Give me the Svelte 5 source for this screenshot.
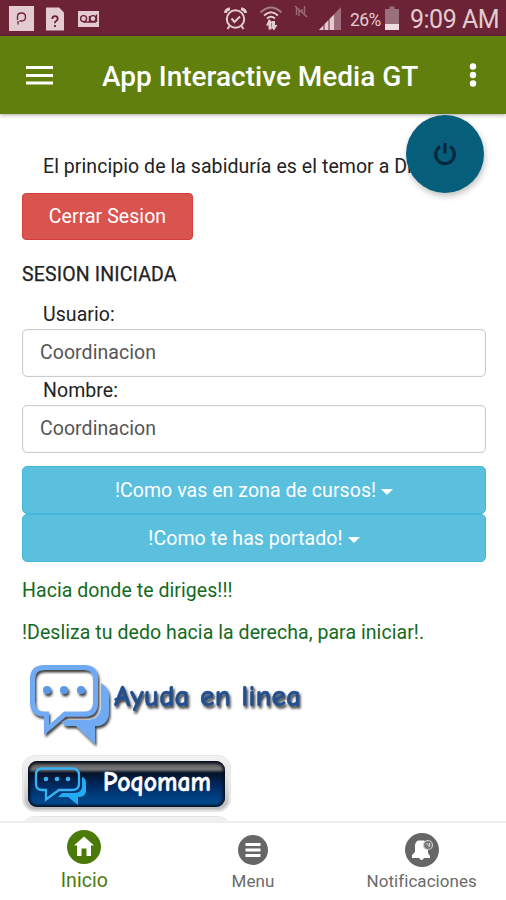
<script>
  const fields = [
    { label: 'Usuario:', value: 'Coordinacion' },
    { label: 'Nombre:', value: 'Coordinacion' }
  ];
  const menus = ['!Como vas en zona de cursos!', '!Como te has portado!'];
</script>

<div class="app">
  <div class="status">
    <svg class="left" width="110" height="36" viewBox="0 0 110 36">
      <rect x="9" y="6" width="25" height="25" fill="#e3cbd1" />
      <path d="M18 24.500v-3.500M17.500 20v-3.500q0-3.500 4-3.500t4 4-4 4h-2" fill="none" stroke="#6b2335" stroke-width="1.300" />
      <path d="M46 7.500h13l5 5V30.500H46z" fill="#e3cbd1" />
      <path d="M52.300 19q0-2.800 2.700-2.800t2.700 2.500q0 1.500-1.500 2.300t-1.200 2.200M55 25v2" fill="none" stroke="#6b2335" stroke-width="1.800" />
      <rect x="78" y="11" width="21" height="16" fill="#e3cbd1" />
      <g fill="none" stroke="#6b2335" stroke-width="1.400"><circle cx="83.600" cy="18.600" r="3" /><circle cx="93" cy="18.600" r="3" /><path d="M83 22h13M89.500 16v6M96.500 14.500V22" /></g>
    </svg>
    <svg class="right" width="126" height="36" viewBox="0 0 126 36">
      <g fill="none" stroke="#e3cbd1" stroke-width="2">
        <circle cx="15.500" cy="19" r="8.700" />
        <path d="M11.500 18.500l3 3.500 5.500-5.500M9.500 26l-2 3M21.500 26l2 3" />
        <path d="M5.500 13q0-3.500 4.500-4.300M25.500 13q0-3.500-4.500-4.300" stroke-width="3" />
        <path d="M40.500 12.500q10.500-10 21 0" stroke="#a77b88" />
        <path d="M44 15.500q7-6.500 14 0M47 18.500q4-3.500 8 0" />
      </g>
      <path d="M49 19l4 4h-1.500v6.500h-3v-4h-2.500zM54 30.500l-3-3.500h1v-6h3v4h2.500z" fill="#e3cbd1" />
      <path d="M76.500 7v8M79 9v7M75 6l12 11M84.500 6v8M82 9v4" fill="none" stroke="#9b6877" stroke-width="1.500" />
      <path d="M99 30L121 7v23z" fill="#a06d7b" />
      <path d="M99 30L114 14.500V30z" fill="#e3cbd1" />
      <path d="M104 24v6M109 19v11" stroke="#6b2335" stroke-width="1" />
    </svg>
    <span class="pct">26%</span>
    <svg class="battery" width="16" height="36" viewBox="0 0 16 36">
      <path d="M1 9h4.500V6.500h5V9H15v21H1z" fill="#99707c" /><path d="M1 24h14v6H1z" fill="#efdce1" />
    </svg>
    <span class="time">9:09 AM</span>
  </div>

  <header>
    <svg class="burger" width="28" height="22" viewBox="0 0 28 22"><path d="M0 3.500h27M0 11.500h27M0 19h27" stroke="#fff" stroke-width="3.200" /></svg>
    <h1>App Interactive Media GT</h1>
    <svg class="dots" width="8" height="26" viewBox="0 0 8 26" fill="#fff"><circle cx="4" cy="4.500" r="3.200" /><circle cx="4" cy="13" r="3.200" /><circle cx="4" cy="21.500" r="3.200" /></svg>
    <button class="fab" aria-label="Power">
      <svg width="26" height="26" viewBox="0 0 26 26" fill="none" stroke="#06283d" stroke-width="3.200"><path d="M8 5.500a9.300 9.300 0 1 0 10 0M13 2v10.500" /></svg>
    </button>
  </header>

  <main>
    <p class="lead">El principio de la sabiduría es el temor a Dios</p>
    <button class="danger">Cerrar Sesion</button>
    <h2>SESION INICIADA</h2>
    {#each fields as f}
      <div class="field">
        <div class="label">{f.label}</div>
        <div class="input">{f.value}</div>
      </div>
    {/each}
    <div class="menus">
      {#each menus as m}
        <button class="info"><span>{m}</span><i></i></button>
      {/each}
    </div>
    <p class="green first">Hacia donde te diriges!!!</p>
    <p class="green">!Desliza tu dedo hacia la derecha, para iniciar!.</p>

    <svg class="help" width="310" height="100" viewBox="0 0 310 100">
      <defs>
        <filter id="shade" x="-10%" y="-10%" width="125%" height="130%"><feDropShadow dx="1.500" dy="2.500" stdDeviation="1.100" flood-color="#222" flood-opacity=".85" /></filter>
      </defs>
      <g filter="url(#shade)">
        <path d="M79 29Q87 33 87 43V57Q87 70 76 72H73V90L54 72H45Q42 72 40 68L45 66H64Q79 66 79 51z" fill="#70aaf3" />
        <path fill-rule="evenodd" d="M22 11H63Q76 11 76 25V48Q76 62.500 63 62.500H44L22 81V62.500Q8 62 8 48V25Q8 11 22 11zM22 16Q13 16 13 25V48Q13 57.500 22 57.500H27V71L42 57.500H63Q71 57.500 71 48V25Q71 16 63 16z" fill="#70aaf3" />
        <g fill="#5b99e5"><circle cx="25" cy="36" r="4" /><circle cx="42" cy="36" r="4" /><circle cx="59" cy="36" r="4" /></g>
      </g>
      <text class="comic" x="92" y="52" font-size="31" textLength="187" lengthAdjust="spacingAndGlyphs" fill="#24508d" stroke="#24508d" stroke-width=".5" filter="url(#shade)">Ayuda en linea</text>
    </svg>

    <div class="pill">
      <div class="face">
        <svg width="200" height="48" viewBox="0 0 200 48">
          <path d="M14 7.500H44Q51 7.500 51 14V23Q51 29 44 29H31L18 38.500V29H14Q8 29 8 23V14Q8 7.500 14 7.500z" fill="none" stroke="#39b2f2" stroke-width="2.300" />
          <path d="M54 16Q58 17 58 22V30Q58 35 52 36H50V44L40 36H30L34 32H46Q54 32 54 25z" fill="#22adf3" />
          <g fill="#39b2f2"><circle cx="18" cy="18" r="2.300" /><circle cx="29" cy="18" r="2.300" /><circle cx="40" cy="18" r="2.300" /></g>
          <text class="comic" x="75" y="30" font-size="28" textLength="108" lengthAdjust="spacingAndGlyphs" fill="#fff" stroke="#fff" stroke-width=".6">Poqomam</text>
        </svg>
      </div>
    </div>
    <div class="pill next"></div>
  </main>

  <nav>
    <div class="tab home">
      <svg width="34" height="34" viewBox="0 0 34 34"><circle cx="17" cy="17" r="17" fill="#4c7a08" /><path d="M17 6.500L27 15.500H24V26H19.500V18.500H14.500V26H10V15.500H7z" fill="#fff" /></svg>
      <span>Inicio</span>
    </div>
    <div class="tab menu">
      <svg width="30" height="30" viewBox="0 0 30 30"><circle cx="15" cy="15" r="15" fill="#666" /><path d="M7.500 9.500h15M7.500 15h15M7.500 20.500h15" stroke="#fff" stroke-width="3" /></svg>
      <span>Menu</span>
    </div>
    <div class="tab notify">
      <svg width="34" height="34" viewBox="0 0 34 34"><circle cx="17" cy="17" r="17" fill="#666" /><path d="M13 7.500H19Q23 9 23 14V20L25 23V25H19Q17 29 14 25H7V22L10 19V13Q10 9 13 7.500z" fill="#fff" /><circle cx="23" cy="12" r="4.500" fill="#777" stroke="#ccc" stroke-width="1.200" /><path d="M21.500 10l3 4M24.500 10v3" stroke="#ddd" stroke-width="1" /></svg>
      <span>Notificaciones</span>
    </div>
  </nav>
</div>

<style>
  .app { width: 506px; height: 900px; overflow: hidden; display: flex; flex-direction: column; background: #fff; color: #222; font-family: Roboto, sans-serif; font-size: 19.500px; letter-spacing: .06px; }
  svg { display: block; flex: none; }
  button { border: 0; margin: 0; padding: 0; font: inherit; letter-spacing: inherit; }
  p, h1, h2 { margin: 0; font-weight: 400; white-space: nowrap; }
  .status { height: 36px; flex: none; display: flex; align-items: center; background: #6b2335; color: #e3cbd1; }
  .right { margin-left: 110px; }
  .pct { width: 31px; margin: 3px 0 0 4px; font-size: 17.500px; letter-spacing: -.6px; }
  .battery { margin-left: 3px; }
  .time { margin: 3px 0 0 10px; font-size: 25px; letter-spacing: -.5px; white-space: nowrap; }
  header { position: relative; z-index: 2; height: 78px; flex: none; display: flex; align-items: center; background: #607f0d; color: #fff; box-shadow: 0 1px 4px rgba(0,0,0,.35); }
  .burger { margin-left: 26px; }
  h1 { width: 318px; margin: 3px 0 0 48px; font-size: 28px; font-weight: 500; letter-spacing: 0; }
  .dots { margin-left: 49px; }
  .fab { position: absolute; left: 406px; top: 79px; width: 78px; height: 78px; border-radius: 50%; background: #075e7b; display: flex; align-items: center; justify-content: center; box-shadow: 1px 3px 6px rgba(0,0,0,.25); }
  main { flex: 1; min-height: 0; overflow: hidden; padding: 0 20px 0 22px; }
  .lead { margin-top: 41px; padding-left: 21px; line-height: 24px; }
  .danger { display: block; width: 171px; height: 47px; margin-top: 14px; padding: 0 0 1px; border-radius: 4px; border: 1px solid #d43f3a; background: #d9534f; color: #fff; }
  h2 { margin-top: 23px; line-height: 24px; font-size: 19.500px; letter-spacing: .15px; -webkit-text-stroke: .25px currentColor; }
  .field { height: 75.500px; }
  h2 + .field { margin-top: 14px; }
  .label { padding-left: 21px; line-height: 28px; }
  .input { height: 48px; box-sizing: border-box; border: 1.500px solid #ccc; box-shadow: inset 0 0 1px #ccc; border-radius: 5px; padding: 0 17px; line-height: 45px; color: #555; }
  .menus { margin-top: 14px; }
  .info { display: flex; align-items: center; justify-content: center; gap: 5px; width: 100%; height: 48px; border: 1.500px solid #46b8da; border-radius: 5px; background: #5bc0de; color: #fff; }
  .info i { border: 6px solid transparent; border-top-color: #fff; border-bottom: 0; margin-top: 3px; }
  .green { line-height: 24px; margin-top: 18px; color: #146a1b; }
  .green.first { margin-top: 17px; }
  .help { margin-top: 9px; }
  .comic { font-family: "Comic Sans MS", "Comic Neue", "Open Sans", sans-serif; font-weight: 700; }
  .pill { width: 209px; height: 57px; box-sizing: border-box; margin-top: 1px; padding: 5px; border-radius: 13px; background: linear-gradient(#f3f3f3, #ddd 50%, #b8b8b8); border: 1px solid #e5e5e5; box-shadow: inset 0 0 2px 1px #f2f2f2; }
  .face { height: 46px; border-radius: 9px; overflow: hidden; background: linear-gradient(#222 0, #666 10%, #777 18%, #061329 26%, #002b65 55%, #005099 100%); box-shadow: inset 0 0 3px 2px #071020; }
  .next { margin-top: 4px; }
  nav { position: relative; height: 79px; flex: none; display: flex; background: #fff; border-top: 2px solid #eee; box-sizing: border-box; color: #6a6a6a; }
  .tab { flex: 1; display: flex; flex-direction: column; align-items: center; font-size: 17px; }
  .tab span { line-height: 24px; }
  .home { color: #4c7a08; font-size: 19.500px; }
  .home svg { margin: 7px 0 5px; }
  .menu svg { margin: 12px 0 4px; }
  .notify svg { margin: 10px 0 2px; }
</style>
